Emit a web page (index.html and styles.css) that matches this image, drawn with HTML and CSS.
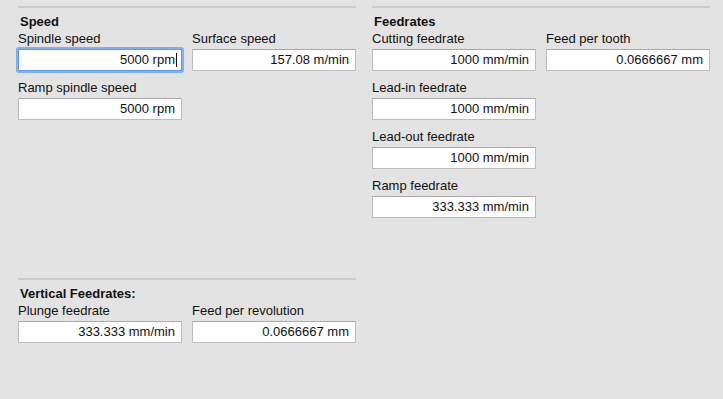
FILE: index.html
```html
<!DOCTYPE html>
<html lang="en">
<head>
  <meta charset="UTF-8" />
  <title>Feeds and Speeds</title>
  <link rel="stylesheet" href="styles.css">
</head>
<body>
  <main class="panel">
    <section class="group">
      <h3 class="group-title">Speed</h3>
      <div class="rows">
        <div class="row">
          <div class="field">
            <label>Spindle speed</label>
            <div class="input focused">5000 rpm<span class="caret"></span></div>
          </div>
          <div class="field">
            <label>Surface speed</label>
            <div class="input">157.08 m/min</div>
          </div>
        </div>
        <div class="row">
          <div class="field">
            <label>Ramp spindle speed</label>
            <div class="input">5000 rpm</div>
          </div>
        </div>
      </div>
    </section>

    <section class="group">
      <h3 class="group-title">Feedrates</h3>
      <div class="rows">
        <div class="row">
          <div class="field">
            <label>Cutting feedrate</label>
            <div class="input">1000 mm/min</div>
          </div>
          <div class="field">
            <label>Feed per tooth</label>
            <div class="input">0.0666667 mm</div>
          </div>
        </div>
        <div class="row">
          <div class="field">
            <label>Lead-in feedrate</label>
            <div class="input">1000 mm/min</div>
          </div>
        </div>
        <div class="row">
          <div class="field">
            <label>Lead-out feedrate</label>
            <div class="input">1000 mm/min</div>
          </div>
        </div>
        <div class="row">
          <div class="field">
            <label>Ramp feedrate</label>
            <div class="input">333.333 mm/min</div>
          </div>
        </div>
      </div>
    </section>

    <section class="group vertical">
      <h3 class="group-title">Vertical Feedrates:</h3>
      <div class="rows">
        <div class="row">
          <div class="field">
            <label>Plunge feedrate</label>
            <div class="input">333.333 mm/min</div>
          </div>
          <div class="field">
            <label>Feed per revolution</label>
            <div class="input">0.0666667 mm</div>
          </div>
        </div>
      </div>
    </section>
  </main>
</body>
</html>
```

FILE: styles.css
```css
body {
  margin: 0;
  background-color: #e3e3e3;
  font-family: 'Liberation Sans', Arial, sans-serif;
  font-size: 13px;
  color: #111;
}
.panel {
  display: grid;
  grid-template-columns: 338px 338px;
  column-gap: 16px;
  align-items: start;
  padding: 6px 0 0 18px;
}
.group {
  border-top: 2px solid #cbcbcb;
}
.group.vertical {
  margin-top: 60px;
}
.group-title {
  margin: 6px 0 1px 2px;
  font-size: 13px;
  line-height: 16px;
  font-weight: bold;
}
.rows {
  display: flex;
  flex-direction: column;
  gap: 9px;
}
.row {
  display: flex;
  gap: 10px;
}
.field {
  display: flex;
  flex-direction: column;
  gap: 2px;
  width: 164px;
}
label {
  line-height: 16px;
}
.input {
  height: 20px;
  line-height: 20px;
  background: white;
  border: 1px solid #bcbcbc;
  border-top-color: #aaa;
  text-align: right;
  padding-right: 6px;
  white-space: nowrap;
}
.input.focused {
  border-color: #5f98e3;
  box-shadow: 0 0 0 2px #7eb0f2;
  border-radius: 1px;
}
.caret {
  display: inline-block;
  width: 1px;
  height: 14px;
  margin-left: 1px;
  margin-right: -2px;
  vertical-align: -3px;
  background: #111;
}
```
